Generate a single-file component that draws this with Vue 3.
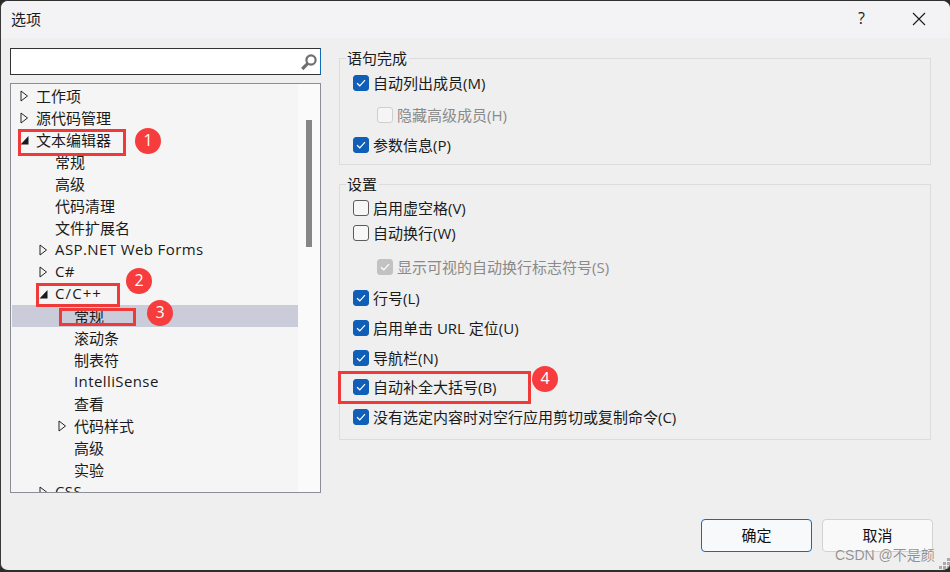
<script setup>
const treeItems = [
  { label: '工作项', level: 0, arrow: 'closed' },
  { label: '源代码管理', level: 0, arrow: 'closed' },
  { label: '文本编辑器', level: 0, arrow: 'open' },
  { label: '常规', level: 1 },
  { label: '高级', level: 1 },
  { label: '代码清理', level: 1 },
  { label: '文件扩展名', level: 1 },
  { label: 'ASP.NET Web Forms', level: 1, arrow: 'closed', latin: 'latin' },
  { label: 'C#', level: 1, arrow: 'closed', latin: 'latin' },
  { label: 'C/C++', level: 1, arrow: 'open', latin: 'wide' },
  { label: '常规', level: 2, selected: true },
  { label: '滚动条', level: 2 },
  { label: '制表符', level: 2 },
  { label: 'IntelliSense', level: 2, latin: 'latin' },
  { label: '查看', level: 2 },
  { label: '代码样式', level: 2, arrow: 'closed' },
  { label: '高级', level: 2 },
  { label: '实验', level: 2 },
  { label: 'CSS', level: 1, arrow: 'closed', latin: 'latin' }
]
const group1 = [
  { label: '自动列出成员(M)', checked: true, gap: 4 },
  { label: '隐藏高级成员(H)', nested: true, disabled: true, gap: 8 },
  { label: '参数信息(P)', checked: true, gap: 6 }
]
const group2 = [
  { label: '启用虚空格(V)', gap: 3 },
  { label: '自动换行(W)', gap: 1 },
  { label: '显示可视的自动换行标志符号(S)', nested: true, disabled: true, checked: true, gap: 10 },
  { label: '行号(L)', checked: true, gap: 7 },
  { label: '启用单击 URL 定位(U)', checked: true, gap: 6 },
  { label: '导航栏(N)', checked: true, gap: 6 },
  { label: '自动补全大括号(B)', checked: true, gap: 5 },
  { label: '没有选定内容时对空行应用剪切或复制命令(C)', checked: true, gap: 6 }
]
const groups = [
  { title: '语句完成', rows: group1, cls: 'g1' },
  { title: '设置', rows: group2, cls: 'g2' }
]
const marks = [
  { n: 1, cls: 'm1' }, { n: 2, cls: 'm2' }, { n: 3, cls: 'm3' }, { n: 4, cls: 'm4' }
]
const rects = ['r1', 'r2', 'r3', 'r4']
const grip = [[8,0],[4,4],[8,4],[0,8],[4,8],[8,8]]
</script>

<template>
  <div class="window">
    <header class="titlebar">
      <span class="title">选项</span>
      <span class="help">?</span>
      <svg class="close" width="14" height="14" viewBox="0 0 14 14"><path d="M1 1L13 13M13 1L1 13" stroke="#1a1a1a" stroke-width="1.1" fill="none"/></svg>
    </header>
    <main class="content">
      <aside class="left">
        <div class="search">
          <svg width="18" height="18" viewBox="0 0 18 18"><circle cx="11" cy="7" r="4.6" fill="#fff" stroke="#6f6f6f" stroke-width="2.2"/><path d="M7.6 10.6L2.2 16" stroke="#6f6f6f" stroke-width="3.2"/></svg>
        </div>
        <div class="tree">
          <div class="tree-list">
            <div v-for="(it, i) in treeItems" :key="i" class="node" :class="['lv' + it.level, { sel: it.selected }]">
              <svg v-if="it.arrow === 'closed'" class="arrow" width="9" height="12" viewBox="0 0 9 12"><path d="M1 1L7.5 6L1 11Z" fill="none" stroke="#222" stroke-width="1"/></svg>
              <svg v-else-if="it.arrow === 'open'" class="arrow" width="9" height="12" viewBox="0 0 9 12"><path d="M8.5 2V10.5H.5Z" fill="#1a1a1a"/></svg>
              <span v-else class="arrow"></span>
              <span class="node-text" :class="it.latin">{{ it.label }}</span>
            </div>
          </div>
          <div class="scrollbar"><div class="thumb"></div></div>
        </div>
      </aside>
      <section class="right">
        <fieldset v-for="g in groups" :key="g.title" class="group" :class="g.cls">
          <legend>{{ g.title }}</legend>
          <div v-for="r in g.rows" :key="r.label" class="row" :class="{ nested: r.nested, off: r.disabled }" :style="{ marginTop: r.gap + 'px' }">
            <span class="box" :class="{ on: r.checked }">
              <svg v-if="r.checked" width="10" height="8" viewBox="0 0 10 8"><path d="M1 4.2L3.8 6.8L9 1.2" fill="none" stroke="#fff" stroke-width="1.2"/></svg>
            </span>
            <span class="row-text">{{ r.label }}</span>
          </div>
        </fieldset>
      </section>
    </main>
    <footer class="footer">
      <button class="btn primary">确定</button>
      <button class="btn">取消</button>
    </footer>

    <div v-for="r in rects" :key="r" class="rect" :class="r"></div>
    <div v-for="m in marks" :key="m.n" class="mark" :class="m.cls">{{ m.n }}</div>
    <div class="watermark">CSDN @不是颜</div>
    <div class="grip"><i v-for="(p, i) in grip" :key="i" :style="{ left: p[0] + 'px', top: p[1] + 'px' }"></i></div>
    <div class="edge"></div>
  </div>
</template>

<style>
html, body { margin: 0; background: #2b2b2b; }
</style>

<style scoped>
.window {
  position: relative;
  width: 950px;
  height: 572px;
  box-sizing: border-box;
  background: #efefef;
  border-top: 1px solid #2f2f2f;
  border-left: 1px solid #3a3a3a;
  border-bottom: 2px solid #2f2f2f;
  border-radius: 8px;
  overflow: hidden;
  display: flex;
  flex-direction: column;
  font-family: "Open Sans", "Noto Sans CJK SC", sans-serif;
  font-size: 15px;
  color: #1a1a1a;
}
.titlebar {
  height: 37px;
  flex: none;
  box-sizing: border-box;
  background: #f3f3f5;
  display: flex;
  align-items: center;
  padding: 0 24px 1px 10px;
}
.title { flex: 1; margin-bottom: 2px; }
.help { font-size: 16px; margin-right: 47px; margin-bottom: 2px; }
.content {
  flex: 1;
  display: flex;
  min-height: 0;
}
.left {
  width: 311px;
  margin-left: 9px;
  padding-top: 10px;
  flex: none;
}
.search {
  height: 27px;
  box-sizing: border-box;
  border: 1px solid #333;
  border-right-color: #0f6cbd;
  background: #fff;
  display: flex;
  justify-content: flex-end;
  align-items: center;
  padding-right: 2px;
}
.tree {
  margin-top: 8px;
  height: 410px;
  box-sizing: border-box;
  border: 1px solid #8d8d96;
  background: #f5f5f5;
  display: flex;
  overflow: hidden;
}
.tree-list {
  flex: 1;
  padding-top: 1px;
  min-width: 0;
}
.node {
  height: 22px;
  display: flex;
  align-items: center;
  margin-left: 1px;
  white-space: nowrap;
}
.node-text { margin-bottom: 2px; }
.latin { letter-spacing: 0.4px; }
.wide { letter-spacing: 1.1px; }
.node.sel { background: #cbccd9; }
.arrow { width: 9px; height: 12px; flex: none; margin-right: 7px; }
.lv0 { padding-left: 8px; }
.lv1 { padding-left: 27px; }
.lv2 { padding-left: 46px; }
.scrollbar {
  width: 22px;
  flex: none;
  background: #fafafa;
}
.thumb {
  width: 6px;
  height: 127px;
  margin: 36px 0 0 8px;
  background: #868686;
}
.right {
  flex: 1;
  margin-left: 18px;
  margin-right: 19px;
  padding-top: 11px;
  min-width: 0;
}
.group {
  margin: 0;
  padding: 0;
  min-width: 0;
  border: 1px solid #dcdcdc;
  box-sizing: border-box;
}
.group legend {
  padding: 0 2px 0 1px;
  margin-left: 6px;
  line-height: 18px;
}
.g1 { height: 116px; }
.g2 { height: 265px; margin-top: 10px; }
.row {
  height: 24px;
  display: flex;
  align-items: center;
  padding-left: 13px;
  box-sizing: border-box;
}
.row-text { margin-bottom: 1px; }
.nested { padding-left: 37px; }
.off { color: #8a8a8a; }
.box {
  width: 16px;
  height: 16px;
  box-sizing: border-box;
  border: 1px solid #5c5c5c;
  border-radius: 3px;
  background: #f7f7f7;
  flex: none;
  margin-right: 4px;
  display: flex;
  align-items: center;
  justify-content: center;
}
.box.on { background: #0f5fb8; border-color: #0f5fb8; }
.off .box { border-color: #cfcfcf; background: #f5f5f5; }
.off .box.on { background: #c2c2c2; border-color: #c2c2c2; }
.footer {
  position: absolute;
  top: 518px;
  left: 700px;
  display: flex;
  gap: 10px;
}
.btn {
  width: 111px;
  height: 33px;
  box-sizing: border-box;
  border: 1px solid #d2d2d2;
  border-radius: 4px;
  background: #f9f9f9;
  font: inherit;
  color: #111;
  padding: 0 0 2px;
}
.primary { border: 1.5px solid #0f6cbd; background: #f7f9fb; }
.rect {
  position: absolute;
  box-sizing: border-box;
  border: 3px solid #f03a3a;
}
.r1 { left: 17px; top: 128px; width: 108px; height: 27px; }
.r2 { left: 35px; top: 282px; width: 84px; height: 24px; }
.r3 { left: 58px; top: 307px; width: 77px; height: 18px; }
.r4 { left: 337px; top: 370px; width: 193px; height: 33px; }
.mark {
  position: absolute;
  width: 26px;
  height: 26px;
  border-radius: 50%;
  background: #f63c3c;
  color: #fff;
  font-size: 16px;
  line-height: 25px;
  text-align: center;
}
.m1 { left: 134px; top: 127px; }
.m2 { left: 125px; top: 267px; }
.m3 { left: 146px; top: 299px; }
.m4 { left: 531px; top: 365px; }
.watermark {
  position: absolute;
  left: 834px;
  top: 543px;
  font-family: "Liberation Sans", "Noto Sans CJK SC", sans-serif;
  font-size: 14px;
  color: rgba(110, 110, 110, 0.75);
  text-shadow: 0 0 1px #fff;
}
.grip { position: absolute; left: 938px; top: 557px; width: 11px; height: 11px; }
.grip i { position: absolute; width: 3px; height: 3px; background: #a9a9a9; }
.edge { position: absolute; left: -1px; top: 505px; width: 1px; height: 14px; background: #6fa87d; }
</style>
